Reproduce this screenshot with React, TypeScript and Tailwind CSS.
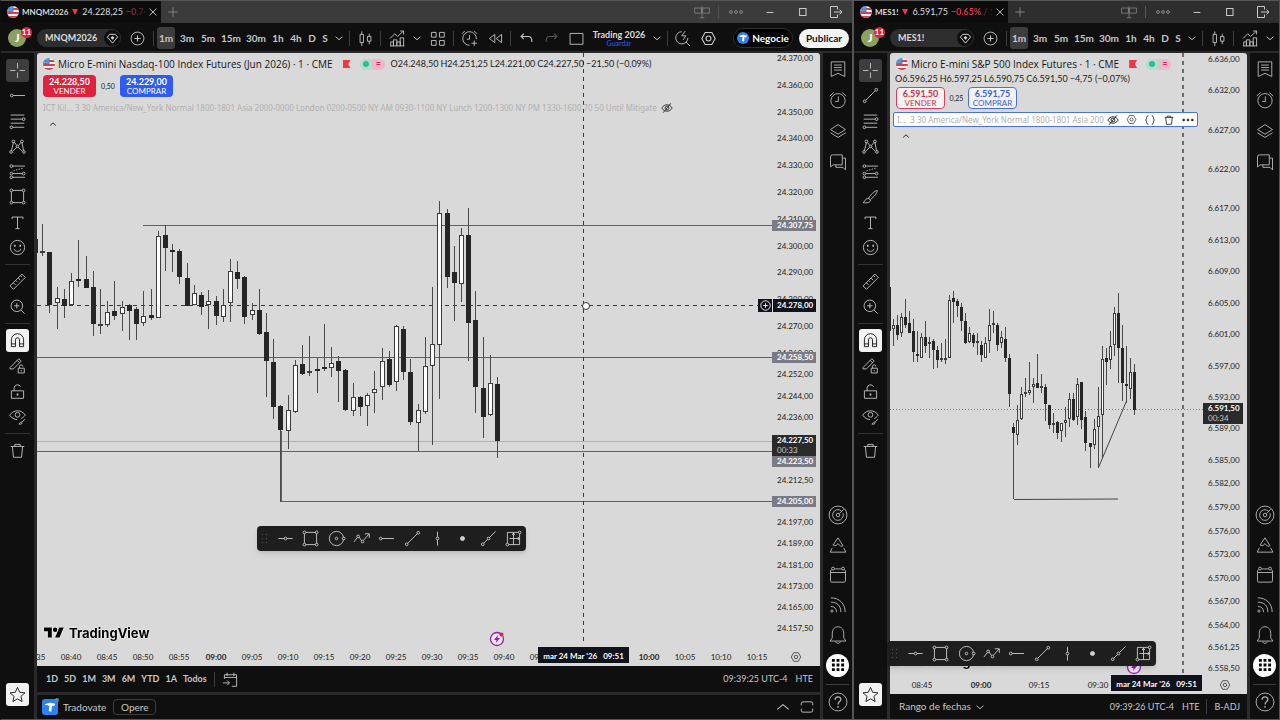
import React from 'react';
import clsx from 'clsx';

type Candle = [high: number, top: number, bottom: number, low: number, up: 0 | 1];

interface Level {
  price: string;
  y: number;
  from?: number;
  tone: 'solid' | 'light' | 'dotted';
}

interface ChartConfig {
  symbol: string;
  last: string;
  change: string;
  title: string;
  ohlc: string[];
  sell: string;
  buy: string;
  spread: string;
  indicator: string;
  compact: boolean;
}

const NQ: ChartConfig = {
  symbol: 'MNQM2026',
  last: '24.228,25',
  change: '−0.74%',
  title: 'Micro E-mini Nasdaq-100 Index Futures (Jun 2026) · 1 · CME',
  ohlc: ['O24.248,50', 'H24.251,25', 'L24.221,00', 'C24.227,50', '−21,50 (−0,09%)'],
  sell: '24.228,50',
  buy: '24.229,00',
  spread: '0,50',
  indicator:
    'ICT Kil... 3 30 America/New_York Normal 1800-1801 Asia 2000-0000 London 0200-0500 NY AM 0930-1100 NY Lunch 1200-1300 NY PM 1330-1600 70 50 Until Mitigate',
  compact: false,
};

const ES: ChartConfig = {
  symbol: 'MES1!',
  last: '6.591,75',
  change: '−0.65% / 1',
  title: 'Micro E-mini S&P 500 Index Futures · 1 · CME',
  ohlc: ['O6.596,25', 'H6.597,25', 'L6.590,75', 'C6.591,50', '−4,75 (−0,07%)'],
  sell: '6.591,50',
  buy: '6.591,75',
  spread: '0,25',
  indicator: 'I...  3 30 America/New_York Normal 1800-1801 Asia 2000-0000 London 0200-0500',
  compact: true,
};

// Candle values are thirds of a pixel below the series origin.
const NQ_CANDLES: Candle[] = [
  [148, 148, 188, 188, 0], [102, 182, 188, 197, 1], [186, 186, 344, 369, 0], [292, 325, 340, 417, 1],
  [298, 328, 349, 383, 0], [250, 272, 346, 348, 1], [150, 266, 269, 292, 0], [198, 268, 293, 293, 0],
  [242, 292, 403, 439, 0], [298, 402, 409, 433, 1], [334, 367, 405, 411, 1], [274, 362, 379, 391, 0],
  [332, 351, 371, 423, 1], [343, 345, 362, 451, 0], [352, 358, 401, 451, 0], [302, 379, 398, 407, 1],
  [296, 375, 385, 391, 0], [124, 139, 385, 385, 1], [106, 136, 173, 243, 0], [162, 180, 182, 245, 0],
  [176, 183, 261, 283, 0], [220, 264, 347, 347, 0], [286, 309, 346, 346, 1], [306, 315, 350, 374, 0],
  [301, 332, 346, 416, 1], [319, 334, 379, 405, 0], [298, 346, 382, 397, 1], [207, 244, 340, 396, 1],
  [212, 247, 266, 297, 0], [258, 262, 381, 401, 0], [340, 361, 376, 391, 1], [298, 361, 431, 435, 0],
  [368, 427, 512, 621, 0], [446, 517, 651, 687, 0], [644, 648, 719, 935, 0], [614, 661, 724, 777, 1],
  [510, 526, 667, 668, 1], [465, 522, 553, 555, 0], [438, 542, 550, 557, 1], [504, 536, 539, 609, 0],
  [402, 532, 536, 543, 0], [471, 518, 533, 561, 1], [497, 514, 542, 636, 0], [538, 540, 660, 664, 0],
  [580, 622, 663, 678, 1], [619, 622, 650, 677, 0], [609, 615, 647, 708, 1], [542, 598, 609, 669, 1],
  [474, 514, 592, 630, 1], [484, 507, 584, 591, 0], [405, 409, 577, 603, 1], [409, 417, 545, 570, 0],
  [507, 546, 696, 705, 0], [643, 659, 698, 782, 1], [442, 529, 665, 672, 1], [292, 461, 527, 765, 1],
  [32, 70, 466, 628, 1], [57, 70, 262, 294, 0], [168, 247, 279, 392, 0], [115, 136, 281, 336, 1],
  [55, 135, 399, 513, 0], [303, 391, 591, 668, 0], [442, 595, 681, 744, 0], [494, 579, 676, 678, 1],
  [560, 583, 753, 803, 0],
];

const ES_CANDLES: Candle[] = [
  [52, 52, 184, 184, 0], [147, 164, 178, 228, 1], [134, 165, 194, 210, 0], [128, 140, 188, 200, 1],
  [88, 142, 164, 175, 0], [122, 160, 188, 190, 0], [147, 184, 247, 275, 0], [182, 253, 259, 275, 0],
  [188, 202, 265, 265, 1], [152, 200, 229, 250, 0], [200, 217, 219, 264, 1], [206, 213, 241, 298, 0],
  [229, 241, 271, 293, 0], [218, 265, 271, 275, 1], [206, 265, 271, 281, 1], [76, 90, 264, 265, 1],
  [64, 84, 95, 158, 0], [88, 94, 107, 140, 0], [100, 112, 152, 182, 0], [129, 153, 218, 222, 0],
  [170, 188, 217, 220, 1], [188, 195, 218, 232, 0], [188, 212, 218, 256, 1], [214, 225, 254, 275, 0],
  [200, 220, 264, 265, 1], [118, 164, 213, 250, 1], [122, 159, 164, 188, 1], [159, 164, 224, 244, 0],
  [182, 200, 218, 234, 1], [170, 206, 265, 276, 0], [252, 265, 371, 411, 0], [459, 471, 489, 687, 0],
  [406, 449, 494, 524, 1], [352, 371, 448, 449, 1], [323, 366, 370, 380, 1], [276, 359, 370, 375, 1],
  [323, 341, 352, 400, 1], [252, 340, 353, 354, 0], [312, 347, 352, 370, 1], [341, 352, 401, 453, 0],
  [406, 406, 464, 476, 0], [430, 459, 464, 488, 1], [452, 455, 489, 506, 0], [458, 460, 482, 517, 1],
  [412, 449, 458, 500, 1], [370, 388, 447, 470, 1], [370, 388, 449, 453, 0], [323, 341, 442, 464, 1],
  [336, 337, 449, 476, 0], [423, 442, 519, 542, 0], [518, 519, 531, 593, 0], [448, 477, 524, 536, 1],
  [352, 437, 470, 593, 1], [229, 266, 436, 565, 1], [234, 265, 277, 346, 0], [182, 229, 270, 298, 1],
  [112, 130, 225, 258, 1], [70, 130, 234, 340, 0], [164, 235, 338, 394, 0], [229, 341, 346, 400, 0],
  [264, 307, 358, 388, 1], [282, 307, 420, 435, 0],
];

const NQ_PRICES = [
  24370, 24360, 24350, 24340, 24330, 24320, 24310, 24300, 24290, 24280, 24270, 24260, 24252, 24244, 24236,
  24212.5, 24197, 24189, 24181, 24173, 24165, 24157.5,
];
const ES_PRICES = [
  6636, 6632, 6627, 6622, 6617, 6613, 6609, 6605, 6601, 6597, 6593, 6589, 6585, 6582, 6579, 6576, 6573, 6570,
  6567, 6564, 6561.25, 6558.5,
];

const NQ_LEVELS: Level[] = [
  { price: '24.307,75', y: 172, from: 106, tone: 'solid' },
  { price: '24.258,50', y: 304, tone: 'solid' },
  { price: '24.227,50', y: 388, tone: 'light' },
  { price: '24.223,50', y: 398, tone: 'solid' },
  { price: '24.205,00', y: 448, from: 244, tone: 'solid' },
];
const ES_LEVELS: Level[] = [{ price: '6.591,50', y: 356, tone: 'dotted' }];

const formatPrice = (value: number) => {
  const [whole, cents] = value.toFixed(2).split('.');
  return `${whole.replace(/(\d)(\d{3})$/, '$1.$2')},${cents}`;
};

const formatTime = (minutes: number) =>
  `${String(Math.floor(minutes / 60)).padStart(2, '0')}:${String(minutes % 60).padStart(2, '0')}`;

/* ---------- icons ---------- */

interface IconProps {
  className?: string;
  children: React.ReactNode;
}

const Icon: React.FC<IconProps> = ({ className = 'size-[19px]', children }) => (
  <svg viewBox="0 0 28 28" className={clsx('shrink-0', className)} fill="none" stroke="currentColor" strokeWidth="1.3" aria-hidden="true">
    {children}
  </svg>
);

const CrossIcon = () => <Icon><path d="M3 14h8M17 14h8M14 3v8M14 17v8" /></Icon>;
const RayIcon = () => <Icon><circle cx="5.5" cy="14" r="2" /><path d="M7.5 14H25" /></Icon>;
const TrendIcon = () => (
  <Icon><circle cx="5.5" cy="22.5" r="2" /><circle cx="22.5" cy="5.5" r="2" /><path d="M7 21 21 7" /></Icon>
);
const FibIcon = () => (
  <Icon>
    <path d="M4 4.500h20M4 10.500h17M4 16.500h20M7 22.500h17" />
    <circle cx="23" cy="10.500" r="2" /><circle cx="5" cy="22.500" r="2" />
  </Icon>
);
const PatternIcon = () => (
  <Icon>
    <path d="M5 20.500 8 8M9.500 8l3.500 4.500M15.500 12.500 19 8M20.500 8l2.500 12.500M7 21l6-6M21 21l-6-6" />
    <circle cx="4.500" cy="22" r="2" /><circle cx="8" cy="6.500" r="2" /><circle cx="14" cy="14" r="1.800" />
    <circle cx="20.500" cy="6.500" r="2" /><circle cx="23.500" cy="22" r="2" />
  </Icon>
);
const PositionIcon = () => (
  <Icon>
    <path d="M7 6h18M7 17h14M7 22.500h18" /><path d="m8 13 14-4" strokeDasharray="2 2" />
    <circle cx="5" cy="6" r="2" /><circle cx="5" cy="17" r="2" /><circle cx="23" cy="17" r="2" /><circle cx="5" cy="22.500" r="2" />
  </Icon>
);
const RectIcon = () => (
  <Icon>
    <path d="M7 5h14M7 23h14M5 7v14M23 7v14" />
    <circle cx="5" cy="5" r="2" /><circle cx="23" cy="5" r="2" /><circle cx="5" cy="23" r="2" /><circle cx="23" cy="23" r="2" />
  </Icon>
);
const BrushIcon = () => (
  <Icon><path d="M11 17c3-6 9-11 13-12 0 4-5 10-10 13M11 17l3 2c0 4-5 5-11 4 3-1 2-6 8-6Z" /></Icon>
);
const TextIcon = () => <Icon><path d="M6 9V6h16v3M14 6v17M11 23h6" /></Icon>;
const SmileIcon = () => (
  <Icon>
    <circle cx="14" cy="14" r="10.500" /><path d="M9 16c1 5 9 5 10 0" />
    <path d="M10 10v3M18 10v3" strokeWidth="2.200" />
  </Icon>
);
const RulerIcon = () => (
  <Icon><path d="m3 20.500 17.500-17.500 5 5L8 25.500ZM8 16l3 3M11.500 12.500l2 2M15 9l3 3M18.500 5.500l2 2" /></Icon>
);
const ZoomIcon = () => (
  <Icon><circle cx="13" cy="13" r="8.500" /><path d="M13 9v8M9 13h8M19 19l5.500 5.500" /></Icon>
);
const MagnetIcon = () => (
  <Icon><path d="M5 23V13a9 9 0 0 1 18 0v10h-6V13a3 3 0 0 0-6 0v10ZM5 19h6M17 19h6" /></Icon>
);
const PencilLockIcon = () => (
  <Icon>
    <path d="m3 17 13-13 3.500 3.500L8 19H3ZM13.500 6.500 17 10" />
    <path d="M15 18h9v7h-9ZM17 18v-2.500a2.500 2.500 0 0 1 5 0M19.500 20.500v2" />
  </Icon>
);
const LockIcon = () => (
  <Icon><path d="M5 13h18v11H5ZM9 13V9a5 5 0 0 1 9.500-2" /><path d="M14 17v3" strokeWidth="2.400" /></Icon>
);
const EyeBrushIcon = () => (
  <Icon>
    <path d="M2.500 12C8 3.500 20 3.500 25.500 12c-2 2.500-4 4-6 5M2.500 12c3 4.500 7 6.500 11 6.500" /><circle cx="14" cy="11.500" r="3.500" />
    <path d="m25 18-5 5M20 22c-2 0-2 2-4 3 2 1 5 0 5-2" />
  </Icon>
);
const TrashIcon: React.FC<{ className?: string }> = ({ className }) => (
  <Icon className={className}><path d="M4 8h20M10 8V5h8v3M6.500 8l1.500 16h12L21.500 8" /></Icon>
);
const StarIcon = () => (
  <Icon><path d="m14 3.500 3.200 7.200 7.800.8-5.900 5.200 1.700 7.700L14 20.400l-6.800 4 1.700-7.700L3 11.500l7.800-.8Z" /></Icon>
);
const ChevronDown = () => <Icon className="size-3"><path d="m6 11 8 7 8-7" strokeWidth="2.200" /></Icon>;
const EyeOffIcon = () => (
  <Icon className="size-3">
    <path d="M2 14C7 4 21 4 26 14 21 24 7 24 2 14ZM23 3 5 25" strokeWidth="2.200" /><circle cx="14" cy="14" r="4.500" strokeWidth="2.200" />
  </Icon>
);
const HexIcon: React.FC<{ className?: string }> = ({ className }) => (
  <Icon className={className}><path d="M8.500 4h11L25 14l-5.500 10h-11L3 14Z" strokeWidth="1.800" /><circle cx="14" cy="14" r="4" strokeWidth="1.800" /></Icon>
);
const HLineIcon = () => <Icon><circle cx="14" cy="14" r="2" /><path d="M3.500 14H12M16 14h8.500" /></Icon>;
const VLineIcon = () => <Icon><circle cx="14" cy="14" r="2" /><path d="M14 4v8M14 16v8.500" /></Icon>;
const CircleToolIcon = () => (
  <Icon><circle cx="14" cy="14" r="10.500" /><circle cx="14" cy="14" r="1.800" /><circle cx="24.500" cy="14" r="2" fill="#1e1e1e" /></Icon>
);
const PathIcon = () => (
  <Icon>
    <path d="m3 19 4.500-6M10.500 12l3.500 5M17 16.500l8-9M19 7h6.500v6" /><circle cx="9" cy="11" r="2" /><circle cx="15.500" cy="18.500" r="2" />
  </Icon>
);
const DotIcon = () => <Icon><circle cx="14" cy="14" r="3" fill="currentColor" /></Icon>;
const ExtendedIcon = () => (
  <Icon><circle cx="5.500" cy="22.500" r="2" /><circle cx="14" cy="14" r="2" /><path d="m7 21 5.500-5.500M15.500 12.500l9-9" /></Icon>
);
const RangeIcon = () => (
  <Icon>
    <path d="M5 5h16M5 5v16M7 23h16M23 7v16M8 14h15M14 6v17M12 9l2-3 2 3M20 12l3 2-3 2" />
    <circle cx="23" cy="5" r="2" /><circle cx="5" cy="23" r="2" />
  </Icon>
);

const UsFlag: React.FC<{ className: string }> = ({ className }) => (
  <svg viewBox="0 0 24 24" className={clsx('shrink-0 overflow-hidden rounded-full', className)} aria-hidden="true">
    <path fill="#f3f0f0" d="M0 0h24v24H0z" />
    <path fill="#d0414c" d="M0 4h24v4H0zM0 12h24v4H0zM0 20h24v4H0z" />
    <path fill="#3f86cf" d="M0 0h13v12H0z" />
    <path stroke="#e5eefb" strokeWidth="1" strokeDasharray="1.500 2" d="M2 3h10M2 6h10M2 9h10" />
  </svg>
);

const TradovateMark: React.FC<{ className: string }> = ({ className }) => (
  <svg viewBox="0 0 24 24" className={clsx('shrink-0', className)} aria-hidden="true">
    <path fill="#2f80f0" d="M0 0h24v24H0z" />
    <path fill="#fff" d="M4 8c4-1 7-3 11-2l5 1-2 4-3-1-1 9-4-1 1-8c-3 0-5 0-7-2Z" />
  </svg>
);

/* ---------- window chrome ---------- */

const TabBar: React.FC<{ chart: ChartConfig }> = ({ chart }) => (
  <header className={clsx('flex h-[22px] shrink-0 items-center', chart.compact ? 'bg-[#2e2e2e]' : 'bg-[#3b3b3b]')}>
    <div className={clsx('flex h-full items-center bg-[#0c0c0c] pl-[6px] text-[9px] text-[#dbdbdb]', chart.compact ? 'w-[154px]' : 'w-[160px]')}>
      <UsFlag className="mr-[3px] size-3" />
      <span className="text-[8px] font-bold">{chart.symbol}</span>
      <svg viewBox="0 0 6 6" className="mx-1 size-[6px] shrink-0 fill-[#f23645]" aria-hidden="true"><path d="M0 0h6L3 6Z" /></svg>
      <span className="whitespace-nowrap">{chart.last}</span>
      <span className={clsx('ml-[3px] min-w-0 flex-1 overflow-hidden bg-clip-text font-bold whitespace-nowrap text-transparent', chart.compact ? 'bg-linear-to-r from-[#e0334a] from-65% to-[#333] to-85%' : 'bg-linear-to-r from-[#c32c40] to-[#401820]')}>
        {chart.change}
      </span>
      <button className="flex w-4 items-center justify-center" aria-label="Cerrar pestaña">
        <Icon className="size-3"><path d="m6 6 16 16M22 6 6 22" strokeWidth="2" /></Icon>
      </button>
    </div>
    <button className="flex w-6 items-center justify-center text-[#8c8c8c]" aria-label="Nueva pestaña">
      <Icon className="size-3"><path d="M14 3v22M3 14h22" strokeWidth="2" /></Icon>
    </button>
    <div className="ml-auto flex items-center text-[#8a8a8a]">
      <button className="flex w-8 justify-center" aria-label="Vincular pestañas">
        <Icon className="h-4 w-[18px]"><path d="M1 7h12v9H1ZM15 7h12v9H15ZM14 4v20M10 24h8" /></Icon>
      </button>
      <span className="h-3 w-px bg-[#555]" />
      <button className="flex w-[34px] justify-center" aria-label="Más">
        <Icon className="size-[14px]"><circle cx="4" cy="14" r="2.800" strokeWidth="2" /><circle cx="14" cy="14" r="2.800" strokeWidth="2" /><circle cx="24" cy="14" r="2.800" strokeWidth="2" /></Icon>
      </button>
      <button className="flex w-[33px] justify-center text-[#c8c8c8]" aria-label="Minimizar">
        <Icon className="size-3"><path d="M6 15h16" strokeWidth="2.400" /></Icon>
      </button>
      <button className="flex w-[33px] justify-center text-[#c8c8c8]" aria-label="Maximizar">
        <Icon className="size-3"><path d="M6 6h15v16H6Z" strokeWidth="2.400" /></Icon>
      </button>
      <button className="flex w-[33px] justify-center text-[#c8c8c8]" aria-label="Salir">
        <Icon className="size-[14px]"><path d="M17 9V3H3v22h14v-6M10 14h16M21 9l5 5-5 5" strokeWidth="2" /></Icon>
      </button>
    </div>
  </header>
);

const INTERVALS = [
  { label: '3m', width: 'w-6' },
  { label: '5m', width: 'w-[18px]' },
  { label: '15m', width: 'w-7' },
  { label: '30m', width: 'w-[22px]' },
  { label: '1h', width: 'w-[22px]' },
  { label: '4h', width: 'w-[14px]' },
  { label: 'D', width: 'w-[18px]' },
  { label: 'S', width: 'w-2' },
];

const Divider = () => <span className="h-[15px] w-px shrink-0 bg-[#3d3d3d]" />;

const ToolButton: React.FC<{ width: string; label: string; children: React.ReactNode }> = ({ width, label, children }) => (
  <button className={clsx('flex h-full shrink-0 items-center justify-center', width)} aria-label={label}>
    {children}
  </button>
);

const TopToolbar: React.FC<{ chart: ChartConfig }> = ({ chart }) => (
  <div className="flex h-7 shrink-0 items-center overflow-hidden bg-[#0f0f0f] pt-[2px] text-[10px] text-[#c8c8c8]">
    <button className="relative ml-[7px] size-[18px] shrink-0 rounded-full bg-[#8ba161] text-[12px] leading-[18px] font-bold text-white">
      J
      <span className="absolute -top-[2px] left-[13px] size-[11px] rounded-full bg-[#e2213f] text-center text-[8px] leading-[11px]">11</span>
    </button>
    <button className="ml-[11px] flex h-[18px] w-[84px] shrink-0 items-center justify-between rounded-full bg-[#2e2e2e] pr-px pl-2 text-[9px] font-bold text-[#dbdbdb]">
      {chart.symbol}
      <span className="flex size-4 items-center justify-center rounded-full bg-[#0f0f0f]">
        <Icon className="size-[13px]"><path d="M8 5h12l5 6-11 13L3 11Z" strokeWidth="2" /><path d="M14 9v7M10.500 12.500h7" strokeWidth="3" /></Icon>
      </span>
    </button>
    <ToolButton width="w-8" label="Comparar">
      <Icon><circle cx="14" cy="14" r="9.500" /><path d="M14 9.500v9M9.500 14h9" strokeWidth="1.600" /></Icon>
    </ToolButton>
    <Divider />
    <button className="ml-[3px] h-[22px] w-[18px] shrink-0 rounded-[3px] bg-[#3d3d3d] font-bold">1m</button>
    {INTERVALS.map(({ label, width }) => (
      <button key={label} className={clsx('shrink-0 font-bold', width)}>{label}</button>
    ))}
    <ToolButton width="w-5" label="Intervalos"><ChevronDown /></ToolButton>
    <Divider />
    <ToolButton width="w-[30px]" label="Velas">
      <Icon><path d="M6 8h5v12H6ZM8.500 3.500V8M8.500 20v5M17 11h5v7h-5ZM19.500 7v4M19.500 18v4.500" /></Icon>
    </ToolButton>
    <Divider />
    <ToolButton width="w-8" label="Indicadores">
      <Icon><path d="M4 25v-6h4v6M8 25v-9h5v9M13 25v-6h5v6M18 25V13h5v12M3 25h21M3 14l7-7 4 4 9-8M18 3h5v5" /></Icon>
    </ToolButton>
    <ToolButton width="w-2" label="Favoritos"><ChevronDown /></ToolButton>
    {!chart.compact && (
      <>
        <ToolButton width="w-8" label="Plantillas">
          <Icon><path d="M5 5h7v7H5ZM17 5h7v7h-7ZM5 17h7v7H5ZM17 17h7v7h-7Z" /></Icon>
        </ToolButton>
        <Divider />
        <ToolButton width="w-[30px]" label="Alerta">
          <Icon><path d="M24 15a10 10 0 1 0-10 9M14 9v6h-4M3 7l4-4M25 7l-4-4M21 17v8M17 21h8" /></Icon>
        </ToolButton>
        <ToolButton width="w-[22px]" label="Reproducir">
          <Icon><path d="M13 8v12l-8-6ZM23 8v12l-8-6Z" /></Icon>
        </ToolButton>
        <span className="w-1 shrink-0" />
        <Divider />
        <ToolButton width="w-[30px]" label="Deshacer">
          <Icon><path d="m10 7-4 4 4 4M6 11h11c4 0 5 3 5 8" strokeWidth="1.600" /></Icon>
        </ToolButton>
        <ToolButton width="w-5" label="Rehacer">
          <Icon className="size-[19px] text-[#555]"><path d="m18 7 4 4-4 4M22 11H11c-4 0-5 3-5 8" strokeWidth="1.600" /></Icon>
        </ToolButton>
        <ToolButton width="w-[30px]" label="Diseño">
          <Icon><path d="M4.500 6.500h19v16h-19Z" /></Icon>
        </ToolButton>
        <button className="flex w-14 shrink-0 flex-col items-center text-[9px] leading-[10px] font-bold whitespace-nowrap text-[#dbdbdb]">
          Trading 2026
          <span className="text-[7px] leading-[7px] font-normal text-[#3c57f0]">Guardar</span>
        </button>
        <ToolButton width="w-5" label="Diseños"><ChevronDown /></ToolButton>
        <Divider />
        <ToolButton width="w-7" label="Búsqueda rápida">
          <Icon><path d="M13 4a9 9 0 1 0 9 9M19 19l6 6M18 3l-5 7h6l-4 6" /></Icon>
        </ToolButton>
        <ToolButton width="w-6" label="Ajustes"><HexIcon className="size-[17px]" /></ToolButton>
        <button className="ml-auto flex h-5 w-[60px] shrink-0 items-center justify-center gap-[3px] rounded-full border border-[#2e2e2e] bg-black font-bold text-white">
          <TradovateMark className="size-3 rounded-full" />
          Negocie
        </button>
        <button className="mr-[3px] ml-[6px] h-[19px] w-[50px] shrink-0 rounded-full bg-[#f4f4f4] font-bold text-[#111]">Publicar</button>
      </>
    )}
  </div>
);

const RailButton: React.FC<{ label: string; tone?: 'active' | 'filled'; children: React.ReactNode }> = ({ label, tone, children }) => (
  <button className="flex min-h-0 flex-1 items-center justify-center" aria-label={label}>
    <span
      className={clsx(
        'flex size-[23px] items-center justify-center rounded-[3px]',
        tone === 'active' && 'bg-[#3d3d3d]',
        tone === 'filled' && 'bg-[#f2f2f2] text-[#0f0f0f]',
      )}
    >
      {children}
    </span>
  </button>
);

const DrawingRail: React.FC<{ compact: boolean }> = ({ compact }) => (
  <nav className="flex w-[33px] shrink-0 flex-col bg-[#0f0f0f] pt-[5px] text-[#c8c8c8]">
    <div className="flex h-[202px] flex-col">
      <RailButton label="Cursor" tone="active"><CrossIcon /></RailButton>
      <RailButton label="Línea">{compact ? <TrendIcon /> : <RayIcon />}</RailButton>
      <RailButton label="Fibonacci"><FibIcon /></RailButton>
      <RailButton label="Patrones"><PatternIcon /></RailButton>
      <RailButton label="Previsión"><PositionIcon /></RailButton>
      <RailButton label="Formas">{compact ? <BrushIcon /> : <RectIcon />}</RailButton>
      <RailButton label="Texto"><TextIcon /></RailButton>
      <RailButton label="Iconos"><SmileIcon /></RailButton>
    </div>
    <span className="mx-1 my-1 h-px bg-[#333]" />
    <div className="flex h-[50px] flex-col">
      <RailButton label="Medir"><RulerIcon /></RailButton>
      <RailButton label="Acercar"><ZoomIcon /></RailButton>
    </div>
    <span className="mx-1 my-1 h-px bg-[#333]" />
    <div className="flex h-[101px] flex-col">
      <RailButton label="Imán" tone="filled"><MagnetIcon /></RailButton>
      <RailButton label="Modo dibujo"><PencilLockIcon /></RailButton>
      <RailButton label="Bloquear"><LockIcon /></RailButton>
      <RailButton label="Ocultar"><EyeBrushIcon /></RailButton>
    </div>
    <span className="mx-1 my-1 h-px bg-[#333]" />
    <div className="flex h-[25px] flex-col">
      <RailButton label="Eliminar"><TrashIcon /></RailButton>
    </div>
    <div className="mt-auto mb-3 flex h-[25px] flex-col">
      <RailButton label="Barra de favoritos" tone="filled"><StarIcon /></RailButton>
    </div>
  </nav>
);

const SideButton: React.FC<{ label: string; height: string; children: React.ReactNode }> = ({ label, height, children }) => (
  <button className={clsx('flex w-full items-center justify-center', height)} aria-label={label}>
    {children}
  </button>
);

const WidgetRail = () => (
  <nav className="flex w-[29px] shrink-0 flex-col bg-[#0f0f0f] text-[#b4b4b4]">
    <SideButton label="Lista" height="h-[31px]">
      <Icon className="size-5"><path d="M4.500 4h19v20.500L14 20l-9.500 4.500ZM8.500 8.500h11M8.500 12h11M8.500 15.500h11" /></Icon>
    </SideButton>
    <SideButton label="Alertas" height="h-[31px]">
      <Icon className="size-5"><circle cx="14" cy="15" r="10" /><path d="M14.500 9v7H10M2.500 8.500 8 3.500M25.500 8.500l-5.500-5" /></Icon>
    </SideButton>
    <SideButton label="Capas" height="h-[31px]">
      <Icon className="size-5"><path d="m14 5 10.500 7L14 18.500 3.500 12ZM3.500 16.500 14 23l10.500-6.500" /></Icon>
    </SideButton>
    <SideButton label="Chats" height="h-[31px]">
      <Icon className="size-5"><path d="M3.500 21V7a3 3 0 0 1 3-3H20v14H7ZM20 8.500h4.500V25L21 21.500H11V18" /></Icon>
    </SideButton>
    <div className="mt-auto">
      <SideButton label="Filtros" height="h-[30px]">
        <Icon className="size-5"><circle cx="14" cy="14" r="12.500" /><path d="M19 8.500a7.500 7.500 0 1 0 2 3M22 6l-6 6" /><circle cx="14" cy="14" r="2.500" /></Icon>
      </SideButton>
      <SideButton label="Pine" height="h-[30px]">
        <Icon className="size-5"><path d="m14 4 7 11-3 1-4-4-3 3-4-1ZM6 18l-3 6h22l-3-6" /></Icon>
      </SideButton>
      <SideButton label="Calendario" height="h-[30px]">
        <Icon className="size-5"><path d="M9 5.500h10M3.500 10.500h21M5 6.500c-1 .5-1.500 1-1.500 2V22a2 2 0 0 0 2 2h17a2 2 0 0 0 2-2V8.500c0-1-.5-1.500-1.500-2" /><circle cx="7" cy="5" r="2" /><circle cx="21" cy="5" r="2" /></Icon>
      </SideButton>
      <SideButton label="Noticias" height="h-[30px]">
        <Icon className="size-5"><path d="M4 4c12 0 20 8 20 20M4 10c9 0 14 5 14 14M4 16c5 0 8 3 8 8" /><circle cx="5.500" cy="22.500" r="1.500" /></Icon>
      </SideButton>
      <SideButton label="Notificaciones" height="h-[30px]">
        <Icon className="size-5"><path d="M14 2.500c-5 0-8 4-8 9V18l-3 4.500h22L22 18v-6.500c0-5-3-9-8-9ZM10.500 23c1 3.500 6 3.500 7 0" /></Icon>
      </SideButton>
      <SideButton label="Productos" height="h-[30px]">
        <span className="flex size-[23px] items-center justify-center rounded-full bg-white text-black">
          <Icon className="size-5">
            <path fill="currentColor" stroke="none" d="M5.500 5.500h4v4h-4zM12 5.500h4v4h-4zM18.500 5.500h4v4h-4zM5.500 12h4v4h-4zM12 12h4v4h-4zM18.500 12h4v4h-4zM5.500 18.500h4v4h-4zM12 18.500h4v4h-4zM18.500 18.500h4v4h-4z" />
          </Icon>
        </span>
      </SideButton>
      <div className="mx-[3px] mt-1 h-px bg-[#3d3d3d]" />
      <SideButton label="Ayuda" height="h-[34px]">
        <Icon className="size-5"><circle cx="14" cy="14" r="12.500" /><path d="M10 11c0-5.500 8-5.500 8-.5 0 3-4 3-4 7M14 19.500V22" strokeWidth="1.800" /></Icon>
      </SideButton>
    </div>
  </nav>
);

/* ---------- chart ---------- */

interface CandlesProps {
  data: Candle[];
  origin: number;
  start: number;
  step: number;
  width: number;
}

const Candles: React.FC<CandlesProps> = ({ data, origin, start, step, width }) => (
  <g>
    {data.map(([high, top, bottom, low, up], i) => {
      const x = Math.round(start + i * step);
      const y = (v: number) => Math.round(origin + v / 3);
      const half = (width - 1) / 2;
      return (
        <g key={i} stroke={up ? '#3c3c3c' : '#262626'} shapeRendering="crispEdges">
          <path d={`M${x + 0.5} ${y(high)}V${y(low)}`} stroke="#4a4a4a" />
          <rect
            x={x - half + 0.5}
            y={y(top) + 0.5}
            width={width - 1}
            height={Math.max(y(bottom) - y(top) - 1, 0.5)}
            fill={up ? '#fff' : '#262626'}
          />
        </g>
      );
    })}
  </g>
);

const LevelLine: React.FC<{ level: Level }> = ({ level }) => (
  <line
    x1={level.from ?? 0}
    x2="100%"
    y1={level.y + 0.5}
    y2={level.y + 0.5}
    stroke={level.tone === 'light' ? '#b0b0b0' : level.tone === 'dotted' ? '#777' : '#606065'}
    strokeDasharray={level.tone === 'dotted' ? '1 2' : undefined}
  />
);

const EventMark: React.FC<{ x: number; y: number }> = ({ x, y }) => (
  <g transform={`translate(${x} ${y})`}>
    <circle r="6.500" fill="#efe4f2" stroke="#8e24aa" strokeWidth="1.300" />
    <path d="M1-4-3 1h2.500L-1 4 3-1H.5Z" fill="#8e24aa" />
    <circle cx="4.500" cy="-4.500" r="2" fill="#e2213f" />
  </g>
);

const Ohlc: React.FC<{ values: string[] }> = ({ values }) => (
  <div className="flex gap-[2px] text-[9px] leading-3 whitespace-nowrap text-[#1c1c1c]">
    {values.map((value) => <span key={value}>{value}</span>)}
  </div>
);

const Legend: React.FC<{ chart: ChartConfig }> = ({ chart }) => (
  <div className="absolute inset-x-0 top-1 pl-[6px]">
    <div className="flex h-[14px] items-center whitespace-nowrap text-[#161616]">
      <UsFlag className="mr-[3px] size-3" />
      <h1 className="font-['Open_Sans',sans-serif] text-[10px] leading-[14px] font-medium">{chart.title}</h1>
      <span className="ml-[10px] h-2 w-2 shrink-0 bg-[#f23645] [clip-path:polygon(0_0,100%_0,70%_50%,100%_100%,0_100%)]" />
      <span className="mr-[6px] ml-[9px] flex h-[11px] w-[25px] shrink-0 overflow-hidden rounded-full text-[9px] leading-[10px]">
        <span className="flex flex-1 items-center justify-center bg-[#b5dccd]"><span className="size-[6px] rounded-full bg-[#2dbd92]" /></span>
        <span className="flex-1 bg-[#f0b6cc] text-center font-bold text-[#d8205c]">≈</span>
      </span>
      {!chart.compact && <Ohlc values={chart.ohlc} />}
    </div>
    {chart.compact && <div className="mt-[2px] -ml-px"><Ohlc values={chart.ohlc} /></div>}
    <div className={clsx('flex h-[22px] items-center text-[9px] leading-[10px]', chart.compact ? 'mt-[2px]' : 'mt-1')}>
      <button className={clsx('h-full rounded-[4px]', chart.compact ? 'w-[49px] border border-[#d5405c] bg-[#f3f3f3] text-[#d0304e]' : 'w-[53px] bg-[#e2213f] text-white')}>
        <span className="block font-bold">{chart.sell}</span>
        <span className="block text-[8px] leading-[9px]">VENDER</span>
      </button>
      <span className={clsx('text-center text-[7px] text-[#222]', chart.compact ? 'w-[23px]' : 'w-6')}>{chart.spread}</span>
      <button className={clsx('h-full rounded-[4px]', chart.compact ? 'w-[49px] border border-[#4a72d8] bg-[#f3f3f3] text-[#3a62cf]' : 'w-[53px] bg-[#2f5bf0] text-white')}>
        <span className="block font-bold">{chart.buy}</span>
        <span className="block text-[8px] leading-[9px]">COMPRAR</span>
      </button>
    </div>
    {chart.compact ? (
      <div className="mt-[3px] -ml-[3px] flex h-[15px] w-[305px] items-center rounded-[2px] border border-[#4a72d8] bg-white pl-[3px] text-[#2a2a2a]">
        <span className="min-w-0 flex-1 overflow-hidden font-['Noto_Sans',sans-serif] text-[8px] leading-3 whitespace-pre text-[#b0b0b0]">{chart.indicator}</span>
        <button className="flex w-[18px] justify-center" aria-label="Mostrar"><EyeOffIcon /></button>
        <button className="flex w-[19px] justify-center" aria-label="Ajustes"><HexIcon className="size-[11px]" /></button>
        <button className="flex w-[18px] justify-center" aria-label="Código fuente">
          <Icon className="size-3"><path d="M10 4c-6 0-2 7-6 10 4 3 0 10 6 10M18 4c6 0 2 7 6 10-4 3 0 10-6 10" strokeWidth="2.200" /></Icon>
        </button>
        <button className="flex w-[19px] justify-center" aria-label="Eliminar"><TrashIcon className="size-3 stroke-2" /></button>
        <button className="flex w-[19px] justify-center" aria-label="Más">
          <Icon className="size-3"><circle cx="4" cy="14" r="2.500" fill="currentColor" /><circle cx="14" cy="14" r="2.500" fill="currentColor" /><circle cx="24" cy="14" r="2.500" fill="currentColor" /></Icon>
        </button>
      </div>
    ) : (
      <div className="mt-[3px] flex h-[15px] items-center gap-1 font-['Noto_Sans',sans-serif] text-[8px] whitespace-nowrap text-[#b0b0b0]">
        <span>{chart.indicator}</span>
        <button className="text-[#333]" aria-label="Mostrar"><EyeOffIcon /></button>
      </div>
    )}
    <button className="mt-[5px] ml-[6px] block text-[#222]" aria-label="Contraer leyenda">
      <Icon className="size-2"><path d="m4 19 10-9 10 9" strokeWidth="3.500" /></Icon>
    </button>
  </div>
);

const FAVORITES = [
  { label: 'Línea horizontal', icon: <HLineIcon /> },
  { label: 'Rectángulo', icon: <RectIcon /> },
  { label: 'Círculo', icon: <CircleToolIcon /> },
  { label: 'Ruta', icon: <PathIcon /> },
  { label: 'Rayo horizontal', icon: <RayIcon /> },
  { label: 'Línea de tendencia', icon: <TrendIcon /> },
  { label: 'Línea vertical', icon: <VLineIcon /> },
  { label: 'Punto', icon: <DotIcon /> },
  { label: 'Rayo', icon: <ExtendedIcon /> },
  { label: 'Rango', icon: <RangeIcon /> },
];

const FavoritesBar: React.FC<{ place: string }> = ({ place }) => (
  <div className={clsx('absolute z-10 flex h-[25px] w-[269px] rounded-[4px] bg-[#1e1e1e] text-[#d0d0d0] shadow-md', place)}>
    <span className="flex w-4 items-center justify-center text-[#555]">
      <svg viewBox="0 0 6 10" className="h-[10px] w-[6px]" fill="currentColor" aria-hidden="true">
        <path d="M0 0h1v1H0zM4 0h1v1H4zM0 4h1v1H0zM4 4h1v1H4zM0 8h1v1H0zM4 8h1v1H4z" />
      </svg>
    </span>
    {FAVORITES.map(({ label, icon }) => (
      <button key={label} className="flex flex-1 items-center justify-center" aria-label={label}>{icon}</button>
    ))}
  </div>
);

const TvLogo = () => (
  <div className="absolute bottom-[5px] left-[7px] flex items-center gap-[5px] text-black [filter:drop-shadow(0_0_1px_#fff)]">
    <svg viewBox="0 0 36 28" className="h-4 w-5" aria-hidden="true">
      <path d="M14 22H7V11H0V4h14v18zM28 22h-8l7.500-18h8L28 22z" />
      <circle cx="20" cy="8" r="4" />
    </svg>
    <span className="font-[Inter,sans-serif] text-[13px] leading-[18px] font-bold">TradingView</span>
  </div>
);

const PriceLabels: React.FC<{ prices: number[]; first: number; scale: number }> = ({ prices, first, scale }) => (
  <>
    {prices.map((price) => (
      <span
        key={price}
        className="absolute left-[5px] text-[8px] leading-3 text-[#1c1c1c]"
        style={{ top: Math.round(first + (prices[0] - price) * scale) }}
      >
        {formatPrice(price)}
      </span>
    ))}
  </>
);

const PriceTag: React.FC<{ level: Level; countdown?: string }> = ({ level, countdown }) => (
  <div
    className={clsx('absolute right-1 left-0 pl-[5px] text-[8px] font-bold text-white', countdown ? 'z-10 bg-[#2a2a2a] pb-px leading-[10px]' : 'bg-[#7b7b85] leading-[11px]')}
    style={{ top: countdown ? level.y - 6 : level.y - 5 }}
  >
    {level.price}
    {countdown && <div className="font-normal text-[#c8c8c8]">{countdown}</div>}
  </div>
);

interface TimeAxisProps {
  times: number[];
  origin: number;
  perMinute: number;
  tag: string;
  gearWidth: string;
}

const TimeAxis: React.FC<TimeAxisProps> = ({ times, origin, perMinute, tag, gearWidth }) => (
  <div className="flex h-[19px] shrink-0">
    <div className="relative min-w-0 flex-1 overflow-hidden">
      {times.map((time) => (
        <span
          key={time}
          className={clsx('absolute top-1 w-8 text-center text-[8px] leading-3 text-[#1c1c1c]', time % 60 === 0 && 'font-bold')}
          style={{ left: Math.round(origin + (time - times[0]) * perMinute) - 16 }}
        >
          {formatTime(time)}
        </span>
      ))}
      <div className={clsx('absolute top-0 flex h-4 w-[91px] items-center justify-center gap-[6px] bg-[#10121c] pt-px text-[8px] font-bold whitespace-nowrap text-white', tag)}>
        <span>mar 24 Mar '26</span>
        <span>09:51</span>
      </div>
    </div>
    <button className={clsx('flex items-center justify-center text-[#333]', gearWidth)} aria-label="Ajustes de escala">
      <HexIcon className="size-3" />
    </button>
  </div>
);

const NqChart = () => (
  <section className="relative flex min-h-0 flex-1 flex-col rounded-t-[3px] bg-[#d9d9d9]">
    <div className="flex min-h-0 flex-1">
      <div className="relative min-w-0 flex-1 overflow-hidden">
        <svg className="absolute size-full">
          {NQ_LEVELS.map((level) => <LevelLine key={level.price} level={level} />)}
          <path d="M0 252.500H721M546.500 0v592" stroke="#3a3a3a" strokeDasharray="4 4" />
          <path d="M244.500 378v70" stroke="#606065" />
          <Candles data={NQ_CANDLES} origin={137} start={-2} step={7.22} width={5} />
          <EventMark x={460} y={586} />
          <circle cx="549" cy="253" r="3.500" fill="#fff" stroke="#333" />
        </svg>
        <Legend chart={NQ} />
        <TvLogo />
        <button className="absolute top-[246px] right-0 flex h-[13px] w-[14px] items-center justify-center bg-[#10121c] text-white" aria-label="Añadir en el precio">
          <Icon className="size-[11px]"><circle cx="14" cy="14" r="12" strokeWidth="2.200" /><path d="M14 8v12M8 14h12" strokeWidth="2.200" /></Icon>
        </button>
      </div>
      <div className="relative w-12 shrink-0">
        <PriceLabels prices={NQ_PRICES} first={-1} scale={2.68} />
        {NQ_LEVELS.map((level) =>
          level.tone === 'light' ? (
            <PriceTag key={level.price} level={level} countdown="00:33" />
          ) : (
            <PriceTag key={level.price} level={level.price === '24.223,50' ? { ...level, y: 408 } : level} />
          ),
        )}
        <div className="absolute top-[246px] right-1 left-px bg-[#10121c] pl-1 text-[8px] leading-[13px] font-bold text-white">24.278,00</div>
      </div>
    </div>
    <TimeAxis
      times={[515, 520, 525, 530, 535, 540, 545, 550, 555, 560, 565, 570, 575, 580, 585, 600, 605, 610, 615]}
      origin={-2}
      perMinute={7.22}
      tag="left-[501px]"
      gearWidth="w-12"
    />
    <FavoritesBar place="top-[473px] left-[220px]" />
  </section>
);

const EsChart = () => (
  <section className="relative flex min-h-0 flex-1 flex-col rounded-t-[3px] bg-[#d9d9d9]">
    <div className="flex min-h-0 flex-1">
      <div className="relative min-w-0 flex-1 overflow-hidden">
        <svg className="absolute size-full">
          {ES_LEVELS.map((level) => <LevelLine key={level.price} level={level} />)}
          <path d="M293 0v622" stroke="#6a6a6a" strokeWidth="2" strokeDasharray="4 4" />
          <Candles data={ES_CANDLES} origin={217} start={-1} step={4.01} width={3} />
          <path d="M124 446.500 228 446M208.500 414.500 236.500 348" stroke="#444" fill="none" />
          <EventMark x={244} y={614} />
        </svg>
        <Legend chart={ES} />
        <TvLogo />
      </div>
      <div className="relative w-11 shrink-0">
        <PriceLabels prices={ES_PRICES} first={0} scale={7.86} />
        {ES_LEVELS.map((level) => <PriceTag key={level.price} level={level} countdown="00:34" />)}
      </div>
    </div>
    <TimeAxis times={[525, 540, 555, 570]} origin={32} perMinute={3.9} tag="left-[221px]" gearWidth="w-11" />
    <FavoritesBar place="bottom-7 -left-[3px]" />
  </section>
);

/* ---------- footers ---------- */

const RANGES = ['1D', '5D', '1M', '3M', '6M', 'YTD', '1A', 'Todos'];

const NqFooter = () => (
  <>
    <footer className="flex h-[26px] shrink-0 items-center bg-[#0f0f0f] pr-[7px] pl-[9px] text-[9px] text-[#c8c8c8]">
      <div className="flex gap-[6px]">
        {RANGES.map((range) => <button key={range} className="font-bold">{range}</button>)}
      </div>
      <span className="mr-[6px] ml-[7px] h-[15px] w-px bg-[#3d3d3d]" />
      <button aria-label="Ir a la fecha">
        <Icon><path d="M5 13V7h18v17h-7M5 11h18M9 4v5M19 4v5M3 19h9M9 15.500l3.500 3.500L9 22.500" /></Icon>
      </button>
      <button className="ml-auto">09:39:25 UTC-4</button>
      <button className="ml-2">HTE</button>
    </footer>
    <footer className="mt-[3px] flex h-6 shrink-0 items-center bg-[#0f0f0f] pr-[5px] pl-[5px] text-[10px] text-[#c8c8c8]">
      <span className="relative mr-[5px]">
        <TradovateMark className="size-4 rounded-[3px]" />
        <span className="absolute -top-px -right-px size-1 rounded-full bg-[#22ab94]" />
      </span>
      Tradovate
      <button className="ml-[7px] h-4 w-[43px] rounded-[4px] border border-[#3d3d3d] leading-[14px]">Opere</button>
      <button className="ml-auto" aria-label="Abrir panel"><Icon className="size-4"><path d="m4 18 10-8 10 8" strokeWidth="1.800" /></Icon></button>
      <button className="ml-2" aria-label="Maximizar panel">
        <Icon className="size-4"><path d="M4 11V8a3 3 0 0 1 3-3h3M18 5h3a3 3 0 0 1 3 3v3M24 17v3a3 3 0 0 1-3 3h-3M10 23H7a3 3 0 0 1-3-3v-3M10 5h8M10 23h8" strokeWidth="1.600" /></Icon>
      </button>
    </footer>
  </>
);

const EsFooter = () => (
  <footer className="flex h-[25px] shrink-0 items-center bg-[#0f0f0f] pr-[7px] pl-[9px] text-[9px] text-[#c8c8c8]">
    <button className="flex items-center gap-[3px] text-[10px]">Rango de fechas <ChevronDown /></button>
    <button className="ml-auto">09:39:26 UTC-4</button>
    <button className="ml-2">HTE</button>
    <span className="mx-[7px] h-[15px] w-px bg-[#3d3d3d]" />
    <button>B-ADJ</button>
  </footer>
);

interface WindowProps {
  chart: ChartConfig;
  className?: string;
  children: React.ReactNode;
}

const ChartWindow: React.FC<WindowProps> = ({ chart, className, children }) => (
  <div className={clsx('flex min-h-0 min-w-0 flex-col border border-[#555] bg-[#2a2a2a]', className)}>
    <TabBar chart={chart} />
    <TopToolbar chart={chart} />
    <div className="mt-[2px] flex min-h-0 flex-1 gap-[3px]">
      <DrawingRail compact={chart.compact} />
      <main className="flex min-w-0 flex-1 flex-col">{children}</main>
      <WidgetRail />
    </div>
  </div>
);

const App = () => (
  <div className="grid h-screen grid-cols-[853fr_427fr] grid-rows-1 overflow-hidden bg-black font-[Lato,'Open_Sans',sans-serif]">
    <ChartWindow chart={NQ} className="border-l-[#0f0f0f]">
      <NqChart />
      <NqFooter />
    </ChartWindow>
    <ChartWindow chart={ES}>
      <EsChart />
      <EsFooter />
    </ChartWindow>
  </div>
);

export default App;
